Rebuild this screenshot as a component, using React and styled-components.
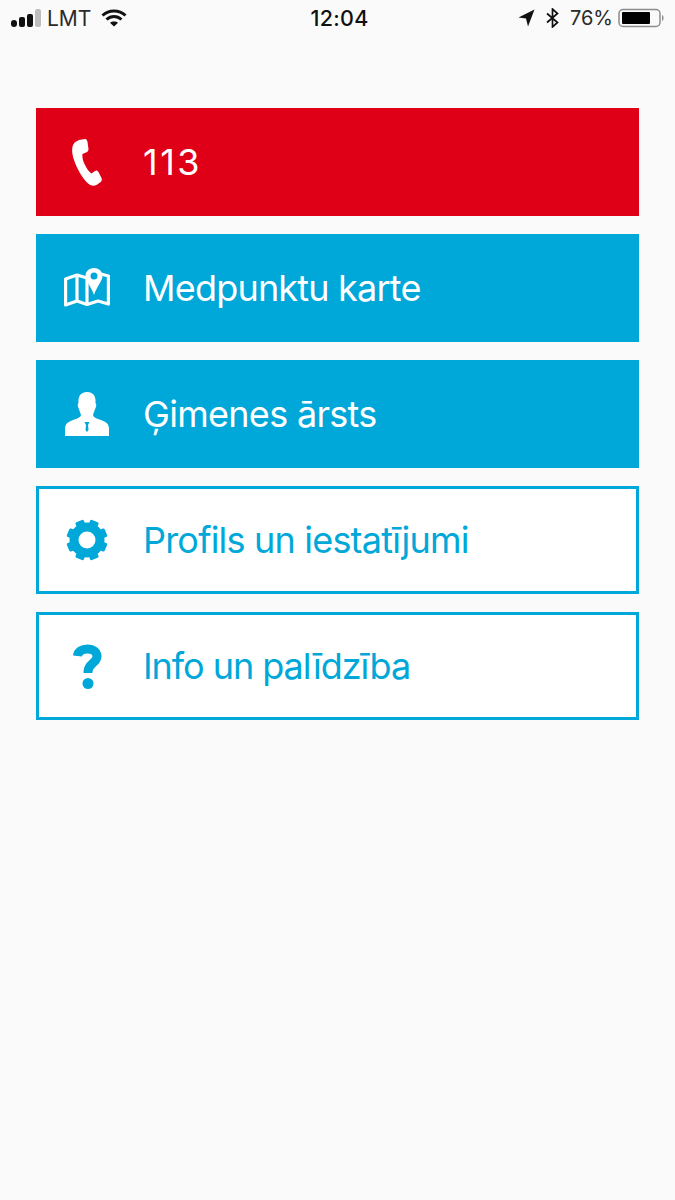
import React from "react"
import styled, { createGlobalStyle } from "styled-components"

const GlobalStyle = createGlobalStyle`
  html, body {
    margin: 0;
    padding: 0;
    background: #fafafa;
    font-family: "Inter", "Liberation Sans", sans-serif;
  }
`

const Page = styled.div`
  width: 675px;
  height: 1200px;
  overflow: hidden;
  background: #fafafa;
`

const StatusBar = styled.header`
  height: 36px;
  display: grid;
  grid-template-columns: 1fr auto 1fr;
  align-items: center;
  padding: 0 10px;
  color: #111;
  font-size: 20px;
`

const StatusLeft = styled.div`
  display: flex;
  align-items: center;
`

const StatusRight = styled.div`
  display: flex;
  align-items: center;
  justify-content: flex-end;
  gap: 11px;
`

const Carrier = styled.span`
  margin: 0 10px 0 5px;
  font-size: 21px;
  color: #2a2a2a;
`

const Clock = styled.span`
  margin-left: 4px;
  font-size: 21.500px;
  font-weight: 500;
  letter-spacing: 0.3px;
`

const Percent = styled.span`
  margin-right: -6px;
  color: #2a2a2a;
`

const Menu = styled.nav`
  display: flex;
  flex-direction: column;
  gap: 18px;
  padding: 72px 36px 0;
`

const MenuRow = styled.a`
  box-sizing: border-box;
  height: 108px;
  display: flex;
  align-items: center;
  border: 3px solid ${(p) => p.$color};
  background: ${(p) => (p.$outlined ? "#fff" : p.$color)};
  color: ${(p) => (p.$outlined ? p.$color : "#fff")};
`

const IconSlot = styled.span`
  width: 96px;
  display: flex;
  justify-content: center;
  align-items: center;
`

const Label = styled.span`
  margin-left: 8px;
  font-size: 36px;
  line-height: 40px;
  letter-spacing: ${(p) => p.$tracking || "-0.8px"};
`

const Signal = () => (
  <svg width="32" height="20" viewBox="0 0 32 20">
    <rect x="1" y="12" width="6" height="7" rx="3" fill="#111" />
    <rect x="9" y="9" width="6" height="10" rx="2" fill="#111" />
    <rect x="17" y="6" width="6" height="13" rx="2" fill="#111" />
    <rect x="25" y="1" width="6" height="18" rx="2" fill="#bdbdbd" />
  </svg>
)

const Wifi = () => (
  <svg width="26" height="20" viewBox="0 0 26 20" fill="none" stroke="#111" strokeWidth="3">
    <path d="M1.500 7.500 C8 1.500 18 1.500 24.500 7.500" />
    <path d="M5.500 11.500 C10 7.500 16 7.500 20.500 11.500" />
    <path d="M13 18.500 L9 14.800 C11 13 15 13 17 14.800 Z" fill="#111" stroke="none" />
  </svg>
)

const Arrow = () => (
  <svg width="17" height="18" viewBox="0 0 17 18">
    <path d="M16.500 0.500 L10 17.500 L8 9.500 L0.500 8.500 Z" fill="#111" />
  </svg>
)

const Bluetooth = () => (
  <svg width="13" height="20" viewBox="0 0 13 20" fill="none" stroke="#111" strokeWidth="1.700">
    <path d="M1 5.500 L11.500 14.500 L6.500 19 L6.500 1 L11.500 5.500 L1 14.500" />
  </svg>
)

const Battery = () => (
  <svg width="47" height="20" viewBox="0 0 47 20">
    <rect x="1" y="1.500" width="41" height="17" rx="4" fill="none" stroke="#8c8c8c" strokeWidth="1.500" />
    <rect x="4" y="4" width="28" height="12" rx="1" fill="#000" />
    <path d="M44 7 C46 7.500 46 12.500 44 13 Z" fill="#8c8c8c" />
  </svg>
)

const PhoneIcon = () => (
  <svg width="30" height="47" viewBox="0 0 30 47">
    <path
      fill="currentColor"
      d="M10 0.500 L13 0 C14.500 0 15 1 15.500 3 L16.500 10 C16.500 12 15.500 13 14 13.500 L10.500 15 C10 18 11 22 13 26 C15 30 17 33 19.500 34.500 L23 32 C24.500 31 25.500 31.500 26.500 33 L29.500 39 C30.300 41 29.500 42.500 28 43.500 L24.500 46 C21 47.500 17.500 46.500 14.500 43 C10 38 5 30 2 21 C0 15 -0.500 10 1 6 C2.500 2.500 6 1 10 0.500 Z"
    />
  </svg>
)

const MapIcon = () => (
  <svg width="46" height="40" viewBox="0 0 46 40">
    <g fill="none" stroke="currentColor" strokeWidth="3.200" strokeLinejoin="round">
      <path d="M23 10 L13 7 L1.600 11 L1.600 37 L13 33 L23 36.500 L34 33 L44.400 36 L44.400 8 L37 6" />
      <path d="M13 7 L13 33" />
      <path d="M23 10 L23 36" />
    </g>
    <path
      fill="currentColor"
      fillRule="evenodd"
      d="M30 0 C24.500 0 21.500 4 21.500 8 C21.500 13 27 18 30 27 C33 18 38.500 13 38.500 8 C38.500 4 35.500 0 30 0 Z M30 4.500 A3.500 3.500 0 1 1 30 11.500 A3.500 3.500 0 1 1 30 4.500 Z"
    />
  </svg>
)

const PersonIcon = () => (
  <svg width="44" height="44" viewBox="0 0 44 44">
    <path
      fill="currentColor"
      fillRule="evenodd"
      d="M22 0 C15 0 13 5 13.500 11 C12.500 12 12.500 14 13.500 16 C14.500 19 15.500 21 16 23 C15.500 25.500 12 26.500 8 28 C3 30 0.500 31.500 0 36 L0 44 L44 44 L44 36 C43.500 31.500 41 30 36 28 C32 26.500 28.500 25.500 28 23 C28.500 21 29.500 19 30.500 16 C31.500 14 31.500 12 30.500 11 C31 5 29 0 22 0 Z M19.500 30 L24.500 30 L23 33 L23.500 38 L22 40 L20.500 38 L21 33 Z"
    />
  </svg>
)

const gearTeeth = [0, 45, 90, 135, 180, 225, 270, 315]

const GearIcon = () => (
  <svg width="42" height="42" viewBox="0 0 42 42">
    <circle cx="21" cy="21" r="13" fill="none" stroke="currentColor" strokeWidth="9" />
    {gearTeeth.map((angle) => (
      <rect
        key={angle}
        x="16.500"
        y="0.500"
        width="9"
        height="8"
        rx="1.500"
        fill="currentColor"
        transform={`rotate(${angle + 22.5} 21 21)`}
      />
    ))}
  </svg>
)

const HelpIcon = () => (
  <svg width="29" height="45" viewBox="0 0 29 45">
    <path
      d="M4.500 12 C5 7.500 9 5 14.500 5 C20 5 24 8 24 12.500 C24 19 15 19.500 15 27.500 L15 29"
      fill="none"
      stroke="currentColor"
      strokeWidth="9"
    />
    <circle cx="15" cy="39.500" r="5.500" fill="currentColor" />
  </svg>
)

const BLUE = "#00a7d9"
const RED = "#df0017"

const items = [
  { label: "113", color: RED, tracking: "2.5px", icon: <PhoneIcon /> },
  { label: "Medpunktu karte", color: BLUE, icon: <MapIcon /> },
  { label: "Ģimenes ārsts", color: BLUE, tracking: "-0.7px", icon: <PersonIcon /> },
  { label: "Profils un iestatījumi", color: BLUE, outlined: true, icon: <GearIcon /> },
  { label: "Info un palīdzība", color: BLUE, outlined: true, tracking: "-1.05px", icon: <HelpIcon /> },
]

const App = () => {
  return (
    <Page>
      <GlobalStyle />
      <StatusBar>
        <StatusLeft>
          <Signal />
          <Carrier>LMT</Carrier>
          <Wifi />
        </StatusLeft>
        <Clock>12:04</Clock>
        <StatusRight>
          <Arrow />
          <Bluetooth />
          <Percent>76%</Percent>
          <Battery />
        </StatusRight>
      </StatusBar>
      <Menu>
        {items.map((item) => (
          <MenuRow key={item.label} $color={item.color} $outlined={item.outlined}>
            <IconSlot>{item.icon}</IconSlot>
            <Label $tracking={item.tracking}>{item.label}</Label>
          </MenuRow>
        ))}
      </Menu>
    </Page>
  )
}

export default App
